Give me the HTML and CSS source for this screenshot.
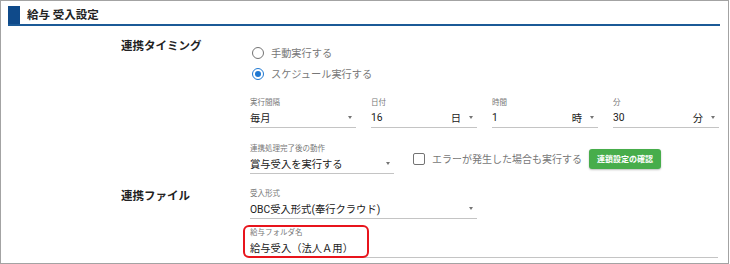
FILE: index.html
```html
<!DOCTYPE html>
<html lang="ja">
<head>
    <meta charset="UTF-8">
    <meta name="viewport" content="width=device-width, initial-scale=1.0">
    <title>給与 受入設定</title>
    <link rel="stylesheet" href="styles.css">
</head>
<body>

<div class="panel">
    <div class="header">
        <span class="header-mark"></span>
        <h2>給与 受入設定</h2>
    </div>

    <!-- 連携タイミング -->
    <div class="section">
        <div class="section-label">連携タイミング</div>
        <div class="section-body">
            <div class="radio-group">
                <div class="radio-row">
                    <span class="radio"></span>
                    <span class="radio-text">手動実行する</span>
                </div>
                <div class="radio-row">
                    <span class="radio checked"></span>
                    <span class="radio-text">スケジュール実行する</span>
                </div>
            </div>

            <div class="schedule-row">
                <div class="field">
                    <div class="field-label">実行間隔</div>
                    <div class="field-value">
                        <span class="value-text">毎月</span>
                        <span class="arrow"></span>
                    </div>
                </div>
                <div class="field">
                    <div class="field-label">日付</div>
                    <div class="field-value">
                        <span class="value-text">16</span>
                        <span class="unit">日</span>
                        <span class="arrow"></span>
                    </div>
                </div>
                <div class="field">
                    <div class="field-label">時間</div>
                    <div class="field-value">
                        <span class="value-text">1</span>
                        <span class="unit">時</span>
                        <span class="arrow"></span>
                    </div>
                </div>
                <div class="field">
                    <div class="field-label">分</div>
                    <div class="field-value">
                        <span class="value-text">30</span>
                        <span class="unit">分</span>
                        <span class="arrow"></span>
                    </div>
                </div>
            </div>

            <div class="after-row">
                <div class="field after-field">
                    <div class="field-label">連携処理完了後の動作</div>
                    <div class="field-value">
                        <span class="value-text">賞与受入を実行する</span>
                        <span class="arrow"></span>
                    </div>
                </div>
                <div class="check-row">
                    <span class="checkbox"></span>
                    <span class="check-text">エラーが発生した場合も実行する</span>
                </div>
                <button class="chain-btn">連鎖設定の確認</button>
            </div>
        </div>
    </div>

    <!-- 連携ファイル -->
    <div class="section file-section">
        <div class="section-label">連携ファイル</div>
        <div class="section-body">
            <div class="field format-field">
                <div class="field-label">受入形式</div>
                <div class="field-value">
                    <span class="value-text">OBC受入形式(奉行クラウド)</span>
                    <span class="arrow"></span>
                </div>
            </div>
            <div class="field folder-field">
                <div class="field-label">給与フォルダ名</div>
                <div class="field-value">
                    <span class="value-text">給与受入（法人Ａ用）</span>
                </div>
                <span class="highlight"></span>
            </div>
        </div>
    </div>
</div>

</body>
</html>
```

FILE: styles.css
```css
body {
    margin: 0;
    font-family: Roboto, "Noto Sans CJK JP", sans-serif;
    background-color: #ffffff;
    color: #212121;
}
.panel {
    box-sizing: border-box;
    width: 729px;
    height: 264px;
    border: 1px solid #a3a3a3;
    overflow: hidden;
}
.header {
    display: flex;
    align-items: stretch;
    height: 18px;
    margin: 5px 8px 0 7px;
    border-bottom: 2px solid #1b5a97;
}
.header-mark {
    width: 12px;
    background-color: #0f4a8a;
}
.header h2 {
    margin: 0 0 0 7px;
    font-size: 11.5px;
    line-height: 18px;
    font-weight: bold;
    color: #222222;
}
.section {
    display: flex;
    padding-left: 120px;
    margin-top: 12px;
}
.section-label {
    width: 129px;
    flex-shrink: 0;
    font-size: 11.5px;
    line-height: 16px;
    font-weight: bold;
    color: #222222;
}
.section-body {
    display: flex;
    flex-direction: column;
}
.radio-group {
    padding-top: 4px;
}
.radio-row {
    display: flex;
    align-items: center;
    height: 21px;
    padding-left: 2px;
}
.radio {
    box-sizing: border-box;
    width: 12px;
    height: 12px;
    border: 1.5px solid #737373;
    border-radius: 50%;
    display: flex;
    align-items: center;
    justify-content: center;
}
.radio.checked {
    border-color: #1e78d2;
}
.radio.checked::after {
    content: "";
    width: 6px;
    height: 6px;
    border-radius: 50%;
    background-color: #1e78d2;
}
.radio-text {
    margin-left: 7px;
    font-size: 10.2px;
    color: #777777;
}
.field {
    box-sizing: border-box;
    border-bottom: 1px solid #c4c4c4;
    padding-bottom: 1px;
}
.field-label {
    font-size: 7.5px;
    line-height: 11px;
    color: #777777;
}
.field-value {
    display: flex;
    align-items: center;
    height: 18px;
    font-size: 10.3px;
    color: #212121;
}
.value-text {
    flex: 1;
}
.unit {
    margin-right: 8px;
}
.arrow {
    width: 0;
    height: 0;
    border-left: 2.5px solid transparent;
    border-right: 2.5px solid transparent;
    border-top: 3px solid #757575;
    margin-right: 4px;
}
.schedule-row {
    display: grid;
    grid-template-columns: repeat(4, 106px);
    column-gap: 15px;
    margin-top: 13px;
}
.after-row {
    display: flex;
    align-items: center;
    margin-top: 15px;
}
.after-field {
    width: 144px;
}
.check-row {
    display: flex;
    align-items: center;
    margin-left: 19px;
}
.checkbox {
    box-sizing: border-box;
    width: 12px;
    height: 12px;
    border: 1.5px solid #737373;
    border-radius: 2px;
}
.check-text {
    margin-left: 7px;
    font-size: 10px;
    color: #777777;
}
.chain-btn {
    margin-left: 7px;
    height: 20px;
    padding: 0 8px;
    border: none;
    border-radius: 3px;
    background-color: #47ad4b;
    color: #ffffff;
    font-family: "Noto Sans CJK JP", sans-serif;
    font-size: 8px;
    font-weight: bold;
    box-shadow: 0 1px 2px rgba(0, 0, 0, 0.25);
    cursor: pointer;
}
.file-section {
    margin-top: 14px;
}
.format-field {
    width: 227px;
}
.folder-field {
    position: relative;
    width: 468px;
    margin-top: 8px;
}
.highlight {
    position: absolute;
    left: -7px;
    top: -2px;
    width: 126px;
    height: 33px;
    box-sizing: border-box;
    border: 2px solid #e8141c;
    border-radius: 6px;
}
```
